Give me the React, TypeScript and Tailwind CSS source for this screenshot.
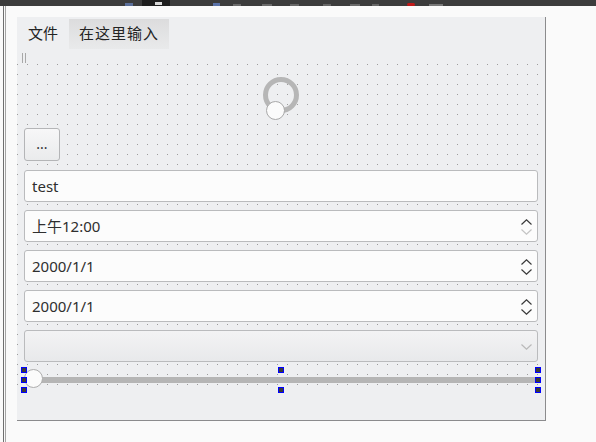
import React from "react";

const FONT = { fontFamily: '"Noto Sans", "Noto Sans CJK SC", sans-serif' };

function Chevron({ dir, color }: { dir: "up" | "down"; color: string }) {
  return (
    <svg width="11" height="6" viewBox="0 0 11 6" className="block">
      <path
        d={dir === "up" ? "M0.5 5.5 L5.5 0.8 L10.5 5.5" : "M0.5 0.5 L5.5 5.2 L10.5 0.5"}
        fill="none"
        stroke={color}
        strokeWidth="1.2"
      />
    </svg>
  );
}

function SpinBox({ value, upColor, downColor }: { value: string; upColor: string; downColor: string }) {
  return (
    <div className="h-[32px] rounded-[3px] border border-[#babbbd] bg-[#fcfcfc] flex items-center pl-[7px] pr-[5px]">
      <span className="flex-1 text-[15px] text-[#2f2f2f]">{value}</span>
      <div className="flex flex-col gap-[4px] pt-[1px]">
        <Chevron dir="up" color={upColor} />
        <Chevron dir="down" color={downColor} />
      </div>
    </div>
  );
}

function Handle() {
  return <div className="w-[6px] h-[6px] border border-[#0000ff] bg-[#3a3a3a]" />;
}

export default function App() {
  return (
    <div className="w-[596px] h-[442px] bg-[#fafafa] overflow-hidden" style={FONT}>
      {/* cropped toolbar of the host window */}
      <div className="h-[6px] bg-[#3c3c3c]">
        <svg width="596" height="6" className="block">
          <rect x="125" y="3" width="8" height="3" fill="#5b6f9a" />
          <rect x="142" y="0" width="28" height="6" fill="#1e1e1e" />
          <rect x="155" y="2" width="7" height="3" fill="#d8d8d8" />
          <rect x="213" y="3" width="7" height="3" fill="#5a72a8" />
          <rect x="233" y="4" width="8" height="2" fill="#6a6a6a" />
          <rect x="262" y="4" width="10" height="2" fill="#6a6a6a" />
          <rect x="290" y="4" width="9" height="2" fill="#666" />
          <rect x="323" y="4" width="8" height="2" fill="#666" />
          <rect x="350" y="4" width="10" height="2" fill="#6a6a6a" />
          <rect x="372" y="4" width="7" height="2" fill="#666" />
          <rect x="407" y="3" width="8" height="3" rx="1.5" fill="#c01818" />
          <rect x="429" y="4" width="14" height="2" fill="#777" />
        </svg>
      </div>

      <div className="flex">
        {/* splitter lines on the left */}
        <div className="ml-[3px] w-[3px] h-[436px] border-l border-r border-l-[#6f6f6f] border-r-[#a5a5a5]" />

        <div className="ml-[11px] mt-[11px] w-[529px] h-[404px] bg-[#eeeff1] border-r border-b border-[#8b8b8d] flex flex-col">
          {/* menu bar */}
          <div className="h-[32px] flex items-center text-[15px] text-[#232323]">
            <div className="pl-[11px] w-[52px]">文件</div>
            <div className="w-[100px] h-[30px] mt-[1px] pl-[10px] flex items-center tracking-[1px] bg-gradient-to-b from-[#dcdcdd] to-[#e9eaeb]">
              在这里输入
            </div>
          </div>

          {/* empty toolbar handle */}
          <div className="h-[15px] flex items-start pt-[4px] pl-[5px] gap-[2px]">
            <div className="w-[1px] h-[10px] bg-[#a8a8a8]" />
            <div className="w-[1px] h-[10px] bg-[#a8a8a8]" />
          </div>

          {/* form canvas with designer grid */}
          <div className="h-[326px] px-[7px] flex flex-col bg-[conic-gradient(from_270deg_at_1px_1px,#9c9c9c_90deg,transparent_0)] bg-[size:10px_10px]">
            <div className="h-[64px] flex justify-center pt-[12px]">
              <svg width="40" height="46" viewBox="0 0 40 46">
                <circle cx="20" cy="19" r="15.5" fill="none" stroke="#b6b6b6" strokeWidth="5" />
                <circle cx="14.5" cy="34.5" r="9" fill="#fbfbfb" stroke="#a9a9a9" strokeWidth="1" />
              </svg>
            </div>

            <div className="w-[36px] h-[33px] rounded-[3px] border border-[#b4b5b7] bg-gradient-to-b from-[#f7f7f8] to-[#eaebec] flex items-center justify-center text-[14px] text-[#333] pb-[2px]">
              ...
            </div>

            <div className="mt-[9px] h-[32px] rounded-[3px] border border-[#babbbd] bg-[#fcfcfc] flex items-center pl-[7px] text-[15px] text-[#2f2f2f]">
              test
            </div>

            <div className="mt-[8px] flex flex-col gap-[8px]">
              <SpinBox value="上午12:00" upColor="#3a3a3a" downColor="#c4c4c4" />
              <SpinBox value="2000/1/1" upColor="#3a3a3a" downColor="#3a3a3a" />
              <SpinBox value="2000/1/1" upColor="#3a3a3a" downColor="#3a3a3a" />
              <div className="h-[32px] rounded-[3px] border border-[#babbbd] bg-gradient-to-b from-[#f3f3f4] to-[#e8e9eb] flex items-center justify-end pr-[5px] pt-[2px]">
                <Chevron dir="down" color="#b9b9b9" />
              </div>
            </div>

            {/* slider with selection handles */}
            <div className="relative mt-[8px] h-[20px] -mx-[1px] flex items-center">
              <div className="flex-1 h-[6px] ml-[4px] bg-[#b5b5b5] rounded-[1px]" />
              <div className="absolute left-[1px] -top-[1px] w-[19px] h-[19px] rounded-full bg-[#fbfbfb] border border-[#adadad]" />
              <div className="absolute -left-[2px] -top-[3px] h-[26px] flex flex-col justify-between">
                <Handle />
                <Handle />
                <Handle />
              </div>
              <div className="absolute left-[255px] -top-[3px] h-[26px] flex flex-col justify-between">
                <Handle />
                <Handle />
              </div>
              <div className="absolute -right-[2px] -top-[3px] h-[26px] flex flex-col justify-between">
                <Handle />
                <Handle />
                <Handle />
              </div>
            </div>
          </div>
        </div>
      </div>
    </div>
  );
}
